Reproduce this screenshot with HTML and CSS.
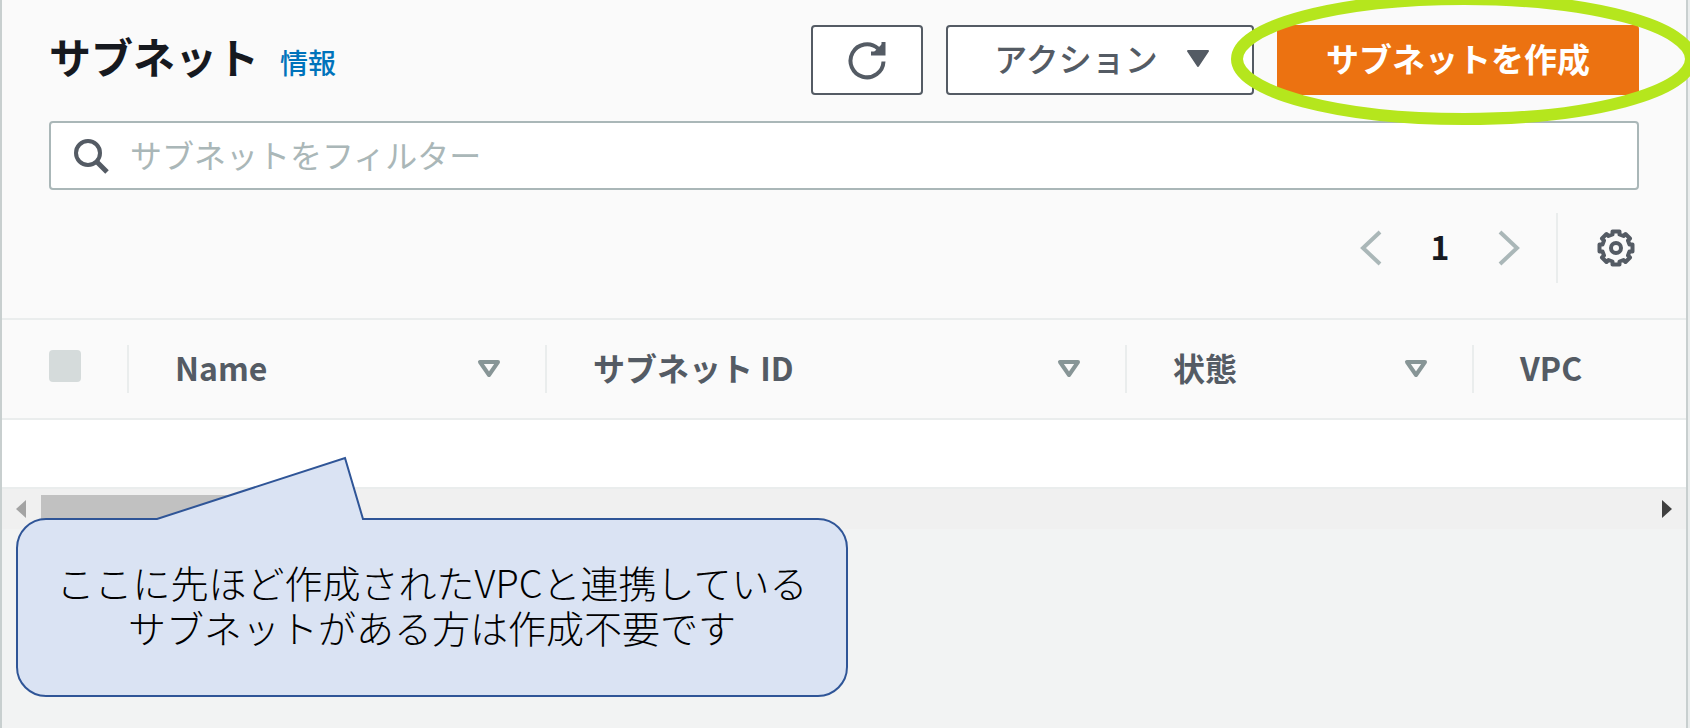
FILE: index.html
```html
<!DOCTYPE html>
<html lang="ja">
<head>
<meta charset="utf-8">
<meta name="viewport" content="width=device-width, initial-scale=1">
<title>サブネット</title>
<link rel="stylesheet" href="styles.css">
</head>
<body>
<main class="panel">
  <section class="toolbar">
    <div class="title-row">
      <h1 class="title">サブネット</h1>
      <a class="info" href="#info">情報</a>
      <div class="actions">
        <button class="btn btn-icon" type="button" aria-label="更新">
          <svg width="40" height="40" viewBox="0 0 40 40" fill="none" stroke="currentColor" stroke-width="4">
            <path d="M36.500 21.500A16.500 16.500 0 1 1 31 8.500L35 12.500"/>
            <path d="M36.500 2V13.500H24"/>
            <path d="M36 3V14H25Z" fill="currentColor" stroke="none"/>
          </svg>
        </button>
        <button class="btn btn-menu" type="button" aria-haspopup="menu">
          <span>アクション</span>
          <svg width="24" height="20" viewBox="0 0 24 20"><path d="M2 3H22L12 18Z" fill="currentColor" stroke="currentColor" stroke-width="2" stroke-linejoin="round"/></svg>
        </button>
        <div class="highlighted">
          <button class="btn btn-primary" type="button">サブネットを作成</button>
          <svg class="ring" width="466" height="132" viewBox="0 0 466 132" fill="none" aria-hidden="true">
            <ellipse cx="233" cy="66" rx="227" ry="60" stroke="#b5e61d" stroke-width="12"/>
          </svg>
        </div>
      </div>
    </div>
    <label class="search">
      <svg width="36" height="36" viewBox="0 0 36 36" fill="none" stroke="currentColor" stroke-width="4"><circle cx="14" cy="15" r="12"/><path d="M22 23L33 34" stroke-width="5"/></svg>
      <input class="search-input" type="search" placeholder="サブネットをフィルター" aria-label="サブネットをフィルター">
    </label>
    <div class="pager-row">
      <nav class="pager" aria-label="ページ">
        <button class="plain" type="button" aria-label="前へ"><svg width="24" height="40" viewBox="0 0 24 40" fill="none" stroke="#aab7b8" stroke-width="4"><path d="M22 4L5 20L22 36"/></svg></button>
        <span class="page">1</span>
        <button class="plain" type="button" aria-label="次へ"><svg width="24" height="40" viewBox="0 0 24 40" fill="none" stroke="#aab7b8" stroke-width="4"><path d="M2 4L19 20L2 36"/></svg></button>
      </nav>
      <div class="settings">
        <button class="plain" type="button" aria-label="設定">
          <svg width="40" height="40" viewBox="0 0 40 40" fill="none" stroke="#545b64" stroke-width="4" stroke-linejoin="round">
            <path d="M16.500 3.500H23.500V6.500L27.500 8L29.500 6L34 10.500L32 12.500L33.500 16.500H36.500V23.500H33.500L32 27.500L34 29.500L29.500 34L27.500 32L23.500 33.500V36.500H16.500V33.500L12.500 32L10.500 34L6 29.500L8 27.500L6.500 23.500H3.500V16.500H6.500L8 12.500L6 10.500L10.500 6L12.500 8L16.500 6.500Z"/>
            <circle cx="20" cy="20" r="5"/>
          </svg>
        </button>
      </div>
    </div>
  </section>

  <table class="grid">
    <colgroup><col class="c-check"><col class="c-name"><col class="c-id"><col class="c-state"><col></colgroup>
    <thead>
      <tr>
        <th><input class="check" type="checkbox" aria-label="すべて選択" disabled></th>
        <th><div class="cell"><span>Name</span><svg width="26" height="22" viewBox="0 0 26 22"><path d="M4 4H22L13 17Z" fill="none" stroke="#879596" stroke-width="4" stroke-linejoin="round"/></svg></div></th>
        <th><div class="cell"><span>サブネット ID</span><svg width="26" height="22" viewBox="0 0 26 22"><path d="M4 4H22L13 17Z" fill="none" stroke="#879596" stroke-width="4" stroke-linejoin="round"/></svg></div></th>
        <th><div class="cell"><span>状態</span><svg width="26" height="22" viewBox="0 0 26 22"><path d="M4 4H22L13 17Z" fill="none" stroke="#879596" stroke-width="4" stroke-linejoin="round"/></svg></div></th>
        <th><div class="cell"><span>VPC</span></div></th>
      </tr>
    </thead>
    <tbody><tr><td colspan="5"></td></tr></tbody>
  </table>

  <div class="scroll">
    <svg width="12" height="20" viewBox="0 0 12 20"><path d="M11 1V19L1 10Z" fill="#a3a3a3"/></svg>
    <div class="track"><div class="thumb"></div></div>
    <svg width="12" height="20" viewBox="0 0 12 20"><path d="M1 1V19L11 10Z" fill="#404040"/></svg>
  </div>

  <aside class="callout">
    <svg class="tail" width="210" height="66" viewBox="0 0 210 66" aria-hidden="true">
      <path d="M2 63L190 2L208 63V66H2Z" fill="#dae3f3"/>
      <path d="M0 63H2L190 2L208 63H210" fill="none" stroke="#2f5597" stroke-width="2"/>
    </svg>
    <p class="callout-text">ここに先ほど作成されたVPCと連携している<br>サブネットがある方は作成不要です</p>
  </aside>
</main>
</body>
</html>
```

FILE: styles.css
```css
* { box-sizing: border-box; }

body {
  margin: 0;
  padding-right: 2px;
  overflow: hidden;
  background: #eaeded;
  color: #16191f;
  font-family: "Noto Sans CJK JP", sans-serif;
  font-size: 32px;
}

.panel {
  position: relative;
  min-height: 100vh;
  background: #f2f3f3;
  border: solid #c8cfcf;
  border-width: 0 2px;
}

.toolbar {
  padding: 25px 47px 35px;
  background: #fafafa;
}

.title-row {
  display: flex;
  align-items: baseline;
  margin-bottom: 26px;
}

.title {
  margin: 0;
  font-size: 42px;
  line-height: 62px;
  font-weight: 700;
}

.info {
  margin-left: 21px;
  color: #0073bb;
  font-size: 28px;
  font-weight: 500;
  line-height: 32px;
  text-decoration: none;
}

.actions {
  display: flex;
  align-self: flex-start;
  gap: 23px;
  margin-left: auto;
}

.btn {
  display: flex;
  align-items: center;
  justify-content: center;
  height: 70px;
  padding: 0;
  border: 2px solid #545b64;
  border-radius: 4px;
  background: #fff;
  color: #545b64;
  font: 500 33px "Noto Sans CJK JP", sans-serif;
}

.btn-icon { width: 112px; }

.btn-menu {
  width: 308px;
  gap: 28px;
  padding: 0 0 4px 4px;
}

.btn-primary {
  width: 362px;
  padding-bottom: 4px;
  border-color: #ec7211;
  background: #ec7211;
  color: #fff;
  font-weight: 700;
}

.highlighted { position: relative; }

.ring {
  position: absolute;
  top: -32px;
  left: -46px;
  pointer-events: none;
}

.search {
  display: flex;
  align-items: center;
  gap: 20px;
  height: 69px;
  padding: 0 23px;
  border: 2px solid #aab7b8;
  border-radius: 4px;
  background: #fff;
  color: #545b64;
}

.search-input {
  flex: 1;
  min-width: 0;
  padding: 0 0 4px;
  border: 0;
  outline: 0;
  background: none;
  color: #16191f;
  font: 400 32px "Noto Sans CJK JP", sans-serif;
}

.search-input::placeholder { color: #aab7b8; }

.pager-row {
  display: flex;
  justify-content: flex-end;
  margin-top: 23px;
}

.pager {
  display: flex;
  align-items: center;
  gap: 48px;
  padding-right: 34px;
}

.page {
  width: 20px;
  font-size: 32px;
  line-height: 36px;
  padding-bottom: 4px;
  font-weight: 700;
  text-align: center;
}

.plain {
  display: flex;
  padding: 0;
  border: 0;
  background: none;
}

.settings {
  display: flex;
  align-items: center;
  height: 70px;
  padding: 0 3px 0 38px;
  border-left: 2px solid #eaeded;
}

.grid {
  width: 100%;
  table-layout: fixed;
  border-collapse: collapse;
  background: #fff;
}

.c-check { width: 125px; }
.c-name { width: 418px; }
.c-id { width: 580px; }
.c-state { width: 347px; }

th {
  height: 100px;
  padding: 0;
  border: solid #eaeded;
  border-width: 2px 0;
  background: #fafafa;
  color: #545b64;
  font-weight: 700;
  text-align: left;
  white-space: nowrap;
}

td {
  height: 68px;
  padding: 0;
}

.check {
  display: block;
  appearance: none;
  width: 32px;
  height: 32px;
  margin: 0 0 6px 47px;
  border-radius: 4px;
  background: #d5dbdb;
}

.cell {
  display: flex;
  align-items: center;
  justify-content: space-between;
  height: 48px;
  padding: 0 43px 0 46px;
  border-left: 2px solid #eaeded;
  line-height: 42px;
}

.cell span { padding-bottom: 4px; }

.scroll {
  display: flex;
  align-items: center;
  gap: 14px;
  height: 42px;
  padding: 0 13px;
  border-top: 2px solid #eaeded;
  background: #f0f0f0;
}

.track { flex: 1; }

.thumb {
  width: 18%;
  height: 28px;
  background: #c1c1c1;
}

.callout {
  position: absolute;
  top: 518px;
  left: 14px;
  display: flex;
  align-items: center;
  justify-content: center;
  width: 832px;
  height: 179px;
  padding-bottom: 8px;
  border: 2px solid #2f5597;
  border-radius: 30px;
  background: #dae3f3;
  color: #000;
}

.tail {
  position: absolute;
  top: -64px;
  left: 137px;
}

.callout-text {
  margin: 0;
  font-size: 38px;
  font-weight: 300;
  line-height: 45px;
  text-align: center;
  white-space: nowrap;
}
```
